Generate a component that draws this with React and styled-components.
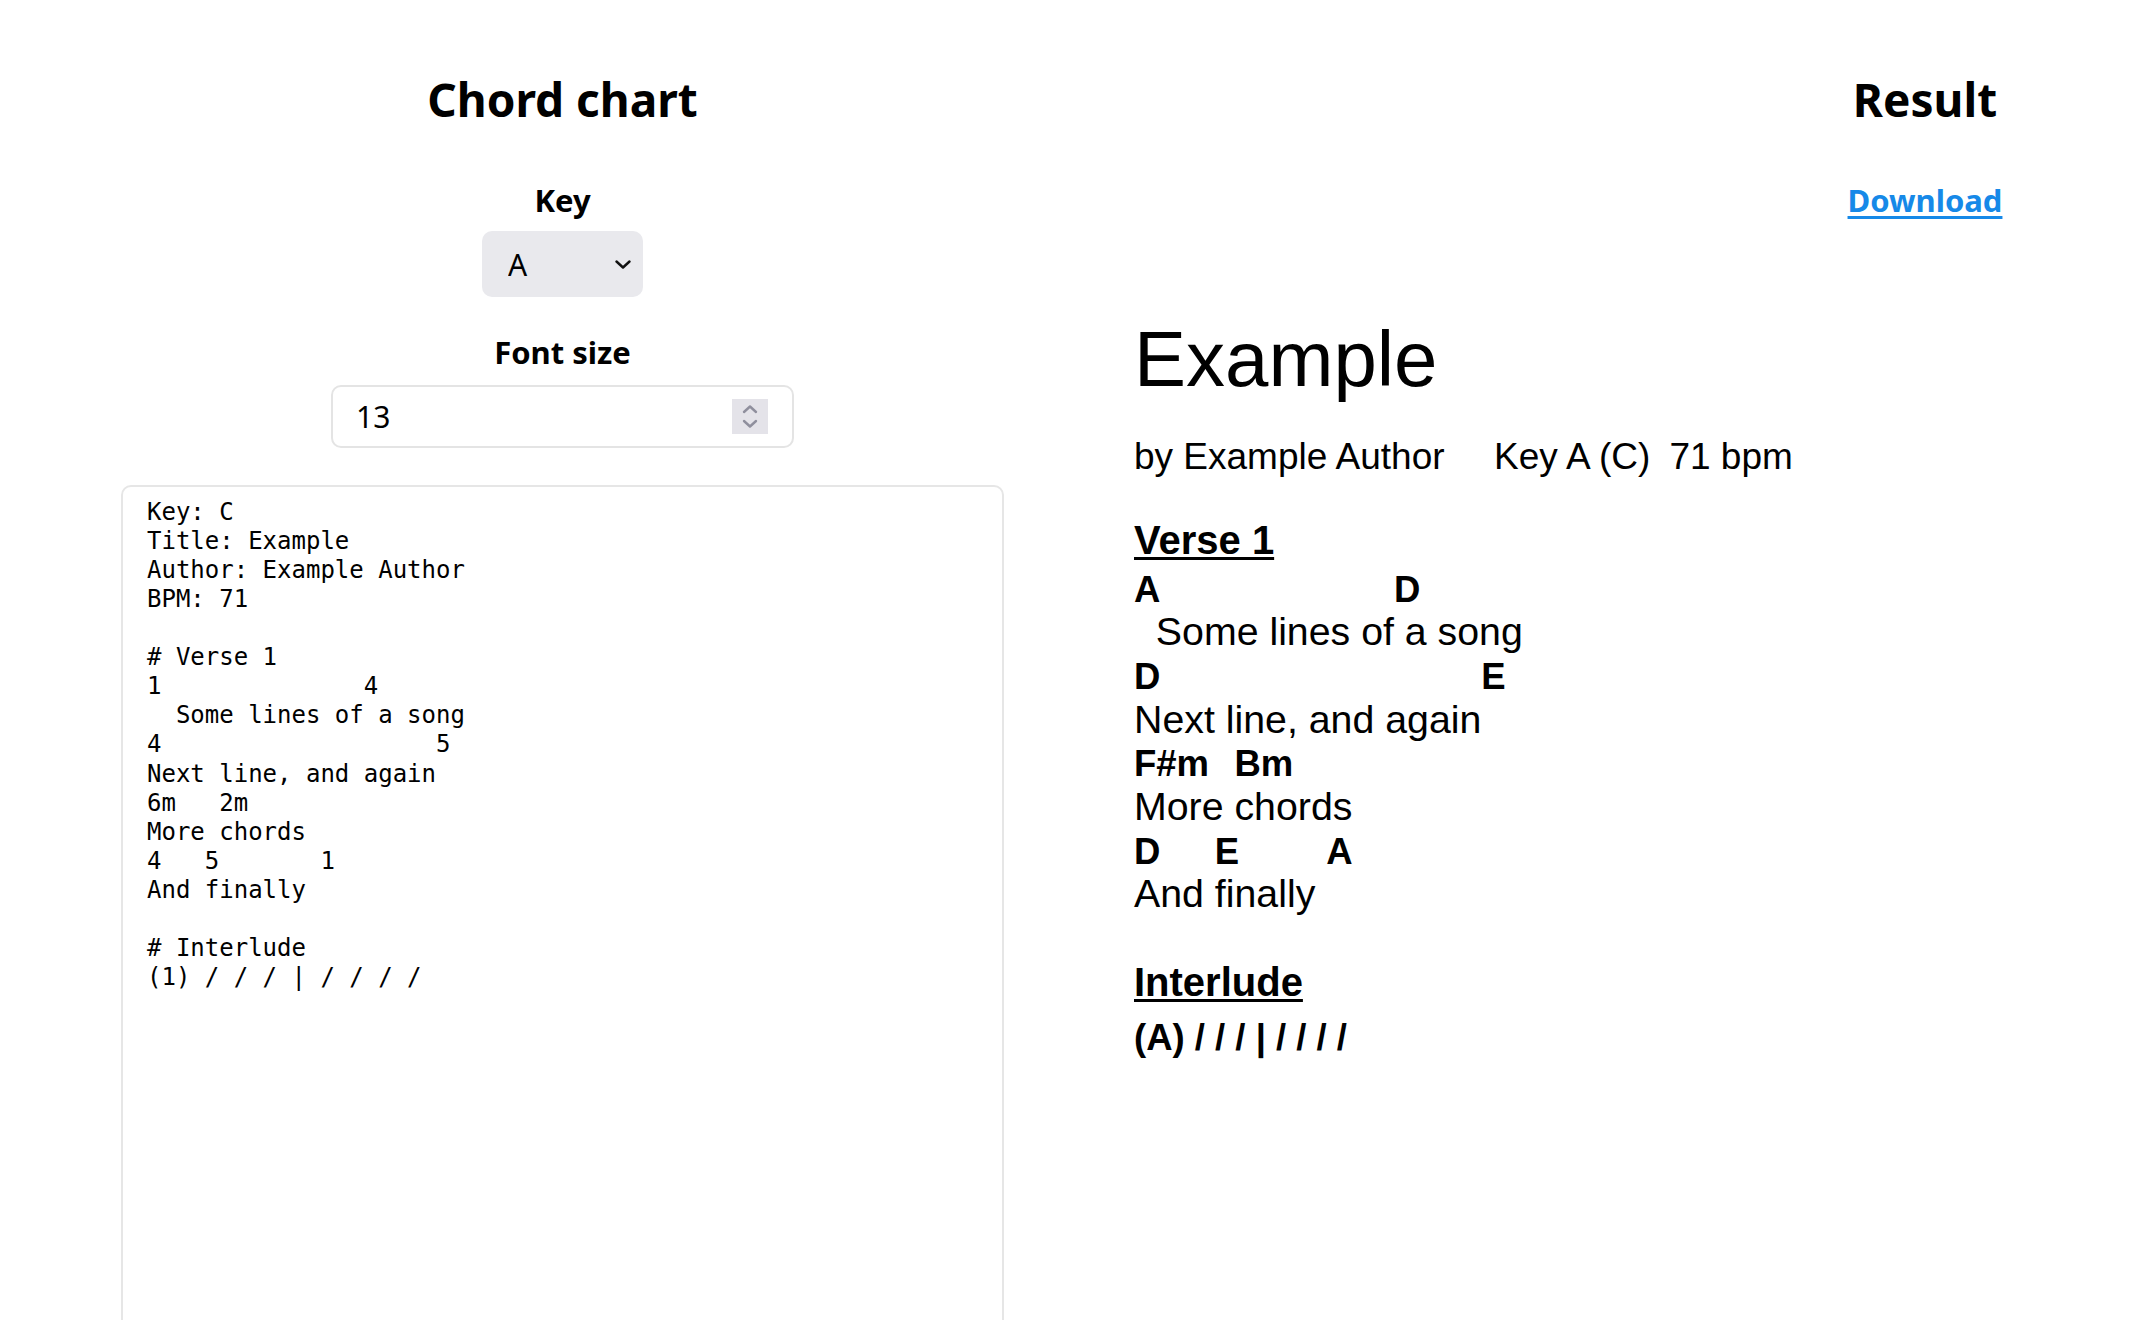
import styled, { createGlobalStyle } from 'styled-components';

const SOURCE = `Key: C
Title: Example
Author: Example Author
BPM: 71

# Verse 1
1              4
  Some lines of a song
4                   5
Next line, and again
6m   2m
More chords
4   5       1
And finally

# Interlude
(1) / / / | / / / /`;

// scale degrees in the selected key (A)
const DEGREES = ['A', 'B', 'C#', 'D', 'E', 'F#', 'G#'];

const toChord = (token) =>
  token.replace(/([1-7])(m?)/, (_, d, minor) => DEGREES[d - 1] + minor);

const isChordLine = (line) => line.trim() !== '' && /^[\s1-7m]+$/.test(line);

const parseChart = (text) => {
  const meta = {};
  const sections = [];
  const lines = text.split('\n');
  let i = 0;

  for (; i < lines.length && lines[i].trim() !== ''; i++) {
    const [key, ...rest] = lines[i].split(':');
    meta[key.trim()] = rest.join(':').trim();
  }

  for (; i < lines.length; i++) {
    const line = lines[i];
    if (line.startsWith('# ')) {
      sections.push({ title: line.slice(2), rows: [] });
    } else if (isChordLine(line)) {
      const chords = [...line.matchAll(/\S+/g)].map((m) => ({
        col: m.index,
        name: toChord(m[0]),
      }));
      const lyric = lines[i + 1] && !isChordLine(lines[i + 1]) ? lines[++i] : '';
      sections[sections.length - 1].rows.push({ type: 'pair', chords, lyric });
    } else if (line.startsWith('(')) {
      sections[sections.length - 1].rows.push({
        type: 'bars',
        text: line.replace(/\(([1-7])\)/, (_, d) => `(${DEGREES[d - 1]})`),
      });
    }
  }
  return { meta, sections };
};

// cut the lyric at every chord column, padding it when a chord sits past the end
const toSegments = (chords, rawLyric) => {
  const lyric = rawLyric.padEnd(chords[chords.length - 1].col, ' ');
  const segments = [];
  if (chords[0].col > 0) segments.push({ chord: '', text: lyric.slice(0, chords[0].col) });
  chords.forEach((c, idx) => {
    const end = idx + 1 < chords.length ? chords[idx + 1].col : lyric.length;
    segments.push({ chord: c.name, text: lyric.slice(c.col, end) });
  });
  return segments;
};

const chart = parseChart(SOURCE);

const App = () => {
  return (
    <>
      <GlobalStyle />
      <Page>
        <Editor>
          <PanelTitle>Chord chart</PanelTitle>
          <FieldLabel htmlFor="key">Key</FieldLabel>
          <SelectWrap>
            <KeySelect id="key" defaultValue="A">
              {['A', 'B', 'C', 'D', 'E', 'F', 'G'].map((k) => (
                <option key={k}>{k}</option>
              ))}
            </KeySelect>
            <SelectChevron viewBox="0 0 16 9">
              <polyline points="1.5,1.5 8,7.5 14.5,1.5" />
            </SelectChevron>
          </SelectWrap>
          <FieldLabel htmlFor="size" $gap={37.3}>
            Font size
          </FieldLabel>
          <NumberBox>
            <NumberInput id="size" defaultValue="13" />
            <Spinner>
              <svg viewBox="0 0 36 35">
                <polyline points="12,13 18,7.5 24,13" />
                <polyline points="12,22 18,27.5 24,22" />
              </svg>
            </Spinner>
          </NumberBox>
          <Source defaultValue={SOURCE} spellCheck={false} />
        </Editor>

        <ResultPane>
          <ResultHeader>
            <PanelTitle>Result</PanelTitle>
            <DownloadLink href="#download">Download</DownloadLink>
          </ResultHeader>
          <Preview>
            <SongTitle>{chart.meta.Title}</SongTitle>
            <Byline>
              <span>by {chart.meta.Author}</span>
              <MetaItem $space={49.5}>
                Key A ({chart.meta.Key})
              </MetaItem>
              <MetaItem $space={19}>{chart.meta.BPM} bpm</MetaItem>
            </Byline>
            {chart.sections.map((section) => (
              <Section key={section.title}>
                <SectionTitle>{section.title}</SectionTitle>
                <Rows>
                  {section.rows.map((row, idx) =>
                    row.type === 'bars' ? (
                      <Bars key={idx}>{row.text}</Bars>
                    ) : (
                      <Line key={idx}>
                        {toSegments(row.chords, row.lyric).map((seg, j) => (
                          <Segment key={j}>
                            <Chord>{seg.chord}</Chord>
                            <Lyric>{seg.text}</Lyric>
                          </Segment>
                        ))}
                      </Line>
                    )
                  )}
                </Rows>
              </Section>
            ))}
          </Preview>
        </ResultPane>
      </Page>
    </>
  );
};

export default App;

const GlobalStyle = createGlobalStyle`
  html, body {
    margin: 0;
    padding: 0;
    overflow: hidden;
    background: #ffffff;
  }
  * {
    box-sizing: border-box;
  }
`;

const Page = styled.div`
  display: flex;
  align-items: flex-start;
  width: 100%;
  font-family: 'Noto Sans', 'DejaVu Sans', sans-serif;
  color: #000;
`;

const Editor = styled.div`
  display: flex;
  flex-direction: column;
  align-items: center;
  flex: 0 0 1125px;
  padding-top: 73px;

  & > * {
    flex-shrink: 0;
  }
`;

const PanelTitle = styled.h1`
  margin: 0;
  font-size: 46px;
  line-height: 52px;
  font-weight: 700;
`;

const FieldLabel = styled.label`
  display: block;
  margin-top: ${({ $gap }) => ($gap ? `${$gap}px` : '57px')};
  font-size: 31px;
  line-height: 36px;
  font-weight: 700;
`;

const SelectWrap = styled.div`
  position: relative;
  margin-top: 13.2px;
  width: 161px;
  height: 66px;
`;

const KeySelect = styled.select`
  appearance: none;
  display: block;
  width: 100%;
  height: 100%;
  padding: 0 0 0 26px;
  border: none;
  border-radius: 10px;
  background: #e9e9ed;
  font-family: 'Noto Sans', sans-serif;
  font-size: 30px;
  color: #000;
  outline: none;
`;

const SelectChevron = styled.svg`
  position: absolute;
  right: 12px;
  top: 29px;
  width: 16px;
  height: 9px;
  fill: none;
  stroke: #111;
  stroke-width: 2.4;
  stroke-linecap: round;
  stroke-linejoin: round;
  pointer-events: none;
`;

const NumberBox = styled.div`
  display: flex;
  align-items: center;
  margin-top: 14.7px;
  width: 463px;
  height: 63px;
  padding: 0 24px 0 23px;
  border: 2px solid #e4e4e4;
  border-radius: 10px;
`;

const NumberInput = styled.input`
  flex: 1;
  min-width: 0;
  border: none;
  outline: none;
  padding: 0;
  font-family: 'Noto Sans', sans-serif;
  font-size: 30px;
  color: #000;
  background: transparent;
`;

const Spinner = styled.div`
  width: 36px;
  height: 35px;
  background: #e4e3e9;

  svg {
    display: block;
    width: 36px;
    height: 35px;
    fill: none;
    stroke: #8f8f9d;
    stroke-width: 2.4;
    stroke-linecap: round;
    stroke-linejoin: round;
  }
`;

const Source = styled.textarea`
  margin-top: 37px;
  width: 883px;
  height: 1000px;
  padding: 10.5px 24px;
  border: 2px solid #e6e6e6;
  border-radius: 10px;
  font-family: 'DejaVu Sans Mono', monospace;
  font-size: 24px;
  line-height: 29.1px;
  color: #000;
  resize: none;
  outline: none;
`;

const ResultPane = styled.div`
  display: flex;
  flex-direction: column;
  flex: 1;
  min-width: 0;
  padding-top: 73px;
`;

const ResultHeader = styled.div`
  display: flex;
  flex-direction: column;
  align-items: center;
  align-self: flex-end;
  width: 462px;
`;

const DownloadLink = styled.a`
  margin-top: 57px;
  font-size: 31px;
  line-height: 36px;
  font-weight: 700;
  color: #1689e8;
  text-decoration: underline;
  text-decoration-thickness: 3px;
  text-underline-offset: 4px;
`;

const Preview = styled.div`
  padding-left: 9px;
  margin-top: 97.5px;
  font-family: 'Liberation Sans', Arial, sans-serif;
  color: #000;
`;

const SongTitle = styled.div`
  font-size: 78px;
  line-height: 86.25px;
`;

const Byline = styled.div`
  margin-top: 34px;
  font-size: 37px;
  line-height: 41.4px;
  white-space: pre;
`;

const MetaItem = styled.span`
  margin-left: ${({ $space }) => $space}px;
`;

const Section = styled.section`
  margin-top: 41px;

  & + & {
    margin-top: 47.5px;
  }
`;

const SectionTitle = styled.div`
  font-size: 40px;
  line-height: 44.85px;
  font-weight: 700;
  text-decoration: underline;
  text-decoration-thickness: 2.5px;
  text-underline-offset: 3px;
`;

const Rows = styled.div`
  display: flex;
  flex-direction: column;
  gap: 7.2px;
  margin-top: 7.8px;
`;

const Line = styled.div`
  display: flex;
  align-items: flex-start;
`;

const Segment = styled.div`
  display: flex;
  flex-direction: column;
`;

const Chord = styled.div`
  height: 42.5px;
  font-size: 36.5px;
  line-height: 38px;
  font-weight: 700;
  white-space: pre;
`;

const Lyric = styled.div`
  height: 37.6px;
  font-size: 39.3px;
  line-height: 37.6px;
  white-space: pre;
`;

const Bars = styled.div`
  padding-top: 6px;
  font-size: 36.5px;
  line-height: 38px;
  font-weight: 700;
  white-space: pre;
`;
